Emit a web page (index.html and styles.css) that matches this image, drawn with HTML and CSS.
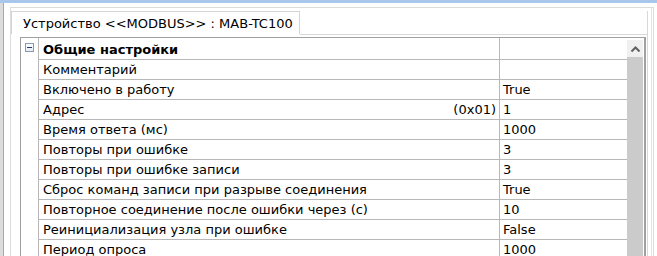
FILE: index.html
```html
<!DOCTYPE html>
<html lang="ru">
<head>
<meta charset="utf-8">
<title>Устройство</title>
<link rel="stylesheet" href="styles.css">
</head>
<body>
<div class="topbar"></div>
<div class="main">
  <div class="leftstrip"></div>
  <div class="panel">
    <div class="panel-inner">
      <div class="tabstrip">
        <div class="tab">Устройство &lt;&lt;MODBUS&gt;&gt; : MAB-TC100</div>
        <div class="tabfill"></div>
      </div>
      <div class="content">
        <div class="grid">
          <div class="gutter">
            <div class="expander"><span class="minus"></span></div>
          </div>
          <div class="rows">
            <div class="row header"><div class="name">Общие настройки</div><div class="value"></div></div>
            <div class="row"><div class="name">Комментарий</div><div class="value"></div></div>
            <div class="row"><div class="name">Включено в работу</div><div class="value">True</div></div>
            <div class="row"><div class="name"><span>Адрес</span><span class="hint">(0x01)</span></div><div class="value">1</div></div>
            <div class="row"><div class="name">Время ответа (мс)</div><div class="value">1000</div></div>
            <div class="row"><div class="name">Повторы при ошибке</div><div class="value">3</div></div>
            <div class="row"><div class="name">Повторы при ошибке записи</div><div class="value">3</div></div>
            <div class="row"><div class="name">Сброс команд записи при разрыве соединения</div><div class="value">True</div></div>
            <div class="row"><div class="name">Повторное соединение после ошибки через (с)</div><div class="value">10</div></div>
            <div class="row"><div class="name">Реинициализация узла при ошибке</div><div class="value">False</div></div>
            <div class="row"><div class="name">Период опроса</div><div class="value">1000</div></div>
          </div>
          <div class="scrollbar">
            <div class="sb-up"><svg width="9" height="6" viewBox="0 0 9 6"><path d="M0.5 5.5 L4.5 1.5 L8.5 5.5" fill="none" stroke="#606060" stroke-width="2"/></svg></div>
            <div class="sb-track"></div>
          </div>
        </div>
      </div>
    </div>
  </div>
</div>
</body>
</html>
```
FILE: styles.css
```css
html, body {
  margin: 0;
  padding: 0;
  background: #ffffff;
  width: 657px;
  height: 256px;
  overflow: hidden;
  font-family: "DejaVu Sans", Verdana, sans-serif;
  font-size: 13px;
  color: #000;
}
.topbar {
  height: 3px;
  background: #a9c7ec;
}
.main {
  display: flex;
  height: 253px;
}
.leftstrip {
  width: 3px;
  background: #dcdcdc;
  border-right: 1px solid #a8a8a8;
  flex: none;
}
.panel {
  margin-left: 6px;
  margin-top: 4px;
  width: 642px;
  border: 1px solid #dcdcdc;
  border-bottom: none;
  flex: none;
  display: flex;
  flex-direction: column;
  overflow: hidden;
}
.panel-inner {
  flex: 1;
  margin-right: 1px;
  border-right: 1px solid #e4e4e4;
  padding-top: 3px;
  display: flex;
  flex-direction: column;
  min-height: 0;
}
.tabstrip {
  display: flex;
  height: 23px;
  flex: none;
}
.tab {
  flex: none;
  width: 289px;
  border: 1px solid #d4d4d4;
  border-bottom: none;
  padding-left: 11px;
  padding-top: 1px;
  box-sizing: border-box;
  line-height: 21px;
  white-space: nowrap;
}
.tabfill {
  flex: none;
  width: 348px;
  border-bottom: 1px solid #d8d8d8;
  border-right: 1px solid #d8d8d8;
  box-sizing: border-box;
  height: 24px;
}
.content {
  flex: 1;
  width: 637px;
  box-sizing: border-box;
  border-right: 1px solid #d8d8d8;
  padding: 3px 0 0 9px;
  display: flex;
  min-height: 0;
}
.grid {
  display: flex;
  width: 626px;
  border-top: 1px solid #a0a0a0;
  border-left: 1px solid #a0a0a0;
  border-right: 2px solid #a0a0a0;
  box-sizing: border-box;
  overflow: hidden;
}
.gutter {
  width: 17px;
  flex: none;
  border-right: 1px solid #b8b8b8;
  position: relative;
}
.expander {
  position: absolute;
  left: 4px;
  top: 5px;
  width: 7px;
  height: 7px;
  border: 1px solid #8a9ab2;
  background: linear-gradient(#ffffff, #e6ebf2);
}
.minus {
  position: absolute;
  left: 1px;
  top: 3px;
  width: 5px;
  height: 1px;
  background: #2a3a6a;
}
.rows {
  width: 588px;
  flex: none;
}
.row {
  display: flex;
  height: 20px;
  border-bottom: 1px solid #b8b8b8;
  box-sizing: border-box;
  line-height: 20px;
}
.row.header {
  height: 22px;
  line-height: 23px;
  font-weight: bold;
}
.name {
  width: 461px;
  flex: none;
  box-sizing: border-box;
  padding-left: 4px;
  padding-right: 3px;
  border-right: 1px solid #b8b8b8;
  display: flex;
  justify-content: space-between;
  white-space: nowrap;
}
.value {
  flex: 1;
  padding-left: 3px;
  white-space: nowrap;
}
.scrollbar {
  width: 16px;
  flex: none;
  display: flex;
  flex-direction: column;
  padding-top: 2px;
  padding-right: 1px;
}
.sb-up {
  height: 17px;
  background: #f0f0f0;
  display: flex;
  align-items: center;
  justify-content: center;
  flex: none;
}
.sb-track {
  flex: 1;
  background: #cbcbcb;
}
```
